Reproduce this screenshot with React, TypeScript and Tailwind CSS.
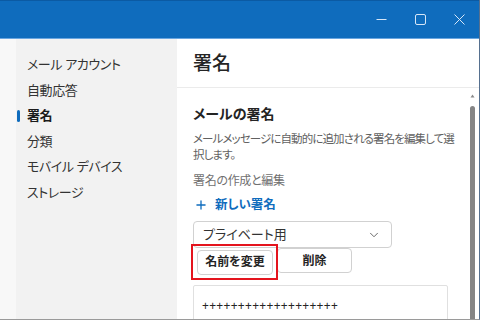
import { ChevronDown, Plus } from 'lucide-react';

const navItems = ['メール アカウント', '自動応答', '署名', '分類', 'モバイル デバイス', 'ストレージ'];

function TitleBar() {
  return (
    <div className="h-[39px] shrink-0 bg-[#0f6cbd] border-t border-[#0b5aa3] border-b border-b-[#6aa6e0] flex items-center justify-end">
      <div className="w-[39px] h-[38px] flex items-center justify-center">
        <svg width="11" height="11" viewBox="0 0 11 11" className="text-[#d6e6f7]">
          <path d="M0.5 5.5H10.5" stroke="currentColor" strokeWidth="1" />
        </svg>
      </div>
      <div className="w-[39px] h-[38px] flex items-center justify-center">
        <svg width="11" height="11" viewBox="0 0 11 11" className="text-[#d6e6f7]">
          <rect x="0.5" y="0.5" width="10" height="10" rx="1.5" fill="none" stroke="currentColor" strokeWidth="1" />
        </svg>
      </div>
      <div className="w-[39px] h-[38px] flex items-center justify-center">
        <svg width="11" height="11" viewBox="0 0 11 11" className="text-[#d6e6f7]">
          <path d="M0.5 0.5L10.5 10.5M10.5 0.5L0.5 10.5" stroke="currentColor" strokeWidth="1" />
        </svg>
      </div>
    </div>
  );
}

function Sidebar() {
  return (
    <div className="w-[177px] shrink-0 flex">
      <div className="w-[16px] bg-[#f8f8f8]" />
      <nav className="flex-1 bg-[#f2f2f2] pt-[13px]">
        {navItems.map((item) => {
          const active = item === '署名';
          return (
            <div key={item} className="relative h-[25.6px] flex items-center pl-[11px]">
              {active && <span className="absolute left-[1px] top-[7px] w-[3px] h-[12px] rounded-full bg-[#0f6cbd]" />}
              <span
                className={
                  active
                    ? 'text-[13px] tracking-[-0.4px] font-bold text-[#1b1b1b]'
                    : 'text-[13px] tracking-[-0.4px] text-[#333333]'
                }
              >
                {item}
              </span>
            </div>
          );
        })}
      </nav>
    </div>
  );
}

export default function App() {
  return (
    <div
      className="w-[480px] h-[320px] overflow-hidden flex flex-col bg-white border-r border-r-[#56708f] border-b border-b-[#9a9a9a] [font-feature-settings:'palt'] text-[#242424]"
      style={{ fontFamily: '"Noto Sans", "Noto Sans CJK JP", sans-serif' }}
    >
      <TitleBar />
      <div className="flex flex-1 min-h-0">
        <Sidebar />
        <main className="flex-1 flex flex-col min-w-0">
          <div className="h-[49px] shrink-0 flex items-center pl-4 border-b border-[#ebebeb]">
            <h1 className="text-[19px] font-medium text-[#242424]">署名</h1>
          </div>
          <div className="relative flex-1 min-h-0 pl-4 pt-4">
            <h2 className="text-[14px] leading-[20px] font-bold text-[#242424]">メールの署名</h2>
            <p className="mt-[7px] w-[266px] text-[11.5px] leading-[16px] tracking-[-0.9px] text-[#616161]">
              メールメッセージに自動的に追加される署名を編集して選択します。
            </p>
            <p className="mt-[10px] text-[12px] leading-[16px] tracking-[-0.3px] text-[#707070]">署名の作成と編集</p>
            <button className="mt-[6px] h-[20px] flex items-center gap-[7px] pl-[1px] text-[#0f6cbd]">
              <Plus className="w-[14px] h-[14px]" strokeWidth={2.25} />
              <span className="text-[12.5px] font-bold">新しい署名</span>
            </button>
            <div className="mt-[6px] w-[199px] h-[27px] border border-[#d1d1d1] rounded-[4px] flex items-center justify-between pl-[9px] pr-[10px]">
              <span className="text-[13px] text-[#333333]">プライベート用</span>
              <ChevronDown className="w-[14px] h-[14px] text-[#555555]" strokeWidth={1.5} />
            </div>
            <div className="flex gap-[4px] pl-[4px]">
              <div className="relative">
                <button className="w-[76px] h-[25px] border border-[#d1d1d1] rounded-[4px] text-[12px] font-bold text-[#242424] bg-white">
                  名前を変更
                </button>
                <span className="absolute -left-[6px] -top-[4px] -right-[5px] -bottom-[5px] border-[2.5px] border-[#e4141d]" />
              </div>
              <button className="w-[75px] h-[25px] border border-[#d1d1d1] rounded-[4px] text-[12px] font-bold text-[#242424] bg-white">
                削除
              </button>
            </div>
            <div className="mt-[10px] w-[255px] h-[60px] border border-[#e0e0e0] rounded-[2px] pl-[8px] pt-[6px]">
              <span className="text-[12px] text-[#242424] tracking-[0.3px]">+++++++++++++++++++</span>
            </div>
            <div className="absolute right-[4px] top-[6px] bottom-0 w-[5px] flex flex-col items-center">
              <svg width="5" height="4" viewBox="0 0 5 4" className="text-[#8a8a8a]">
                <path d="M2.5 0.5L4.5 3.5H0.5Z" fill="currentColor" />
              </svg>
              <div className="mt-[8px] flex-1 w-[5px] rounded-t-full bg-[#858585]" />
            </div>
          </div>
        </main>
      </div>
    </div>
  );
}
